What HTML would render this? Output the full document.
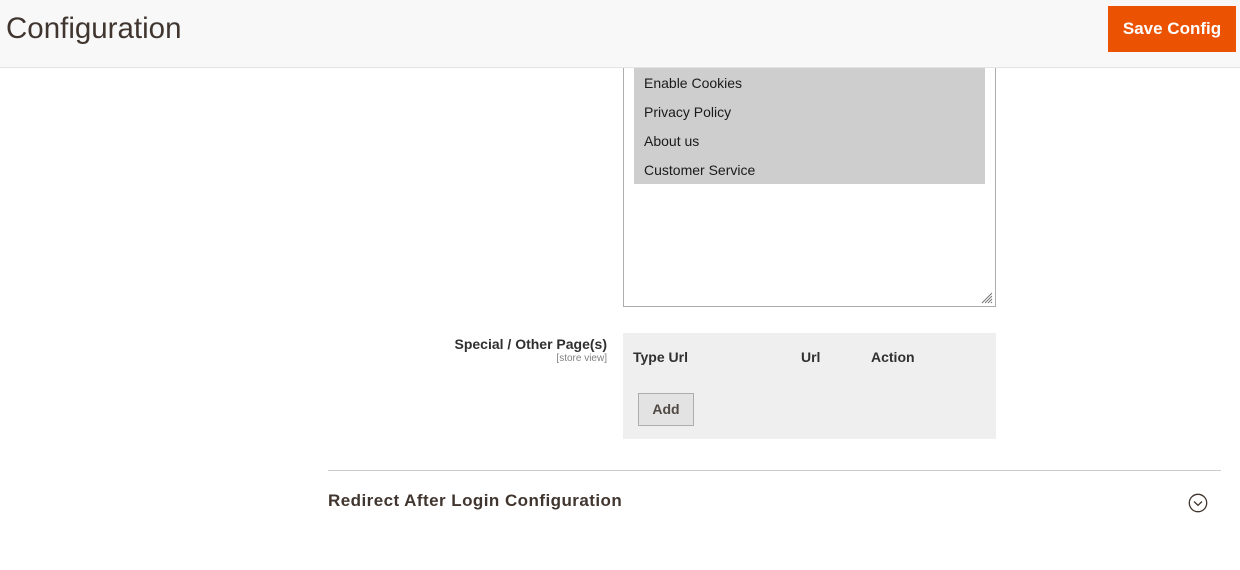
<!DOCTYPE html>
<html><head><meta charset="utf-8"><style>
*{margin:0;padding:0;box-sizing:border-box}
body{width:1240px;height:570px;background:#fff;font-family:"Liberation Sans",sans-serif;color:#303030;position:relative;overflow:hidden}
.hdr{position:absolute;left:0;top:0;width:1240px;height:68px;background:#f8f8f8;border-bottom:1px solid #e3e3e3;z-index:2}
.hdr h1{position:absolute;left:6px;top:12px;font-size:29.5px;font-weight:normal;color:#41362f}
.btn{position:absolute;left:1108px;top:6px;width:128px;height:46px;background:#eb5202;color:#fff;font-size:17px;font-weight:bold;text-align:center;line-height:46px}
.list{position:absolute;left:623px;top:40px;width:373px;height:267px;border:1px solid #adadad;background:#fff}
.sel{position:absolute;left:10px;top:27px;width:351px;height:116px;background:#cecece}
.sel div{height:29px;line-height:30px;padding-left:10px;font-size:14px;color:#1a1a1a}
.grip{position:absolute;right:2px;bottom:2px}
.lbl{position:absolute;right:633px;top:336px;text-align:right;font-size:14px;font-weight:bold;color:#303030}
.lbl small{display:block;font-size:10px;font-weight:normal;color:#808080;margin-top:1px}
.tbl{position:absolute;left:623px;top:333px;width:373px;height:106px;background:#efefef;font-size:14px;font-weight:bold}
.tbl span{position:absolute;top:16px}
.add{position:absolute;left:15px;top:60px;width:56px;height:33px;border:1px solid #adadad;background:#e3e3e3;text-align:center;line-height:31px;font-weight:bold;font-size:14px;color:#514943}
.line{position:absolute;left:328px;top:470px;width:893px;height:1px;background:#cccccc}
.sec{position:absolute;left:328px;top:491px;font-size:17px;font-weight:bold;color:#41362f;letter-spacing:.45px}
</style></head><body>
<div class="hdr"><h1>Configuration</h1><div class="btn">Save Config</div></div>
<div class="list"><div class="sel"><div>Enable Cookies</div><div>Privacy Policy</div><div>About us</div><div>Customer Service</div></div>
<svg class="grip" width="12" height="12" viewBox="0 0 12 12"><path d="M11 1L1 11M11 4L4 11M11 7L7 11M11 10L10 11" stroke="#777" stroke-width="1"/></svg></div>
<div class="lbl">Special / Other Page(s)<small>[store view]</small></div>
<div class="tbl"><span style="left:10px">Type Url</span><span style="left:178px">Url</span><span style="left:248px">Action</span><div class="add">Add</div></div>
<div class="line"></div>
<div class="sec">Redirect After Login Configuration</div>
<svg style="position:absolute;left:1188px;top:493px" width="20" height="20" viewBox="0 0 20 20"><circle cx="10" cy="10" r="8.7" fill="none" stroke="#41362f" stroke-width="1.3"/><path d="M6 8.5L10 12.3L14 8.5" fill="none" stroke="#41362f" stroke-width="1.3"/></svg>
</body></html>
